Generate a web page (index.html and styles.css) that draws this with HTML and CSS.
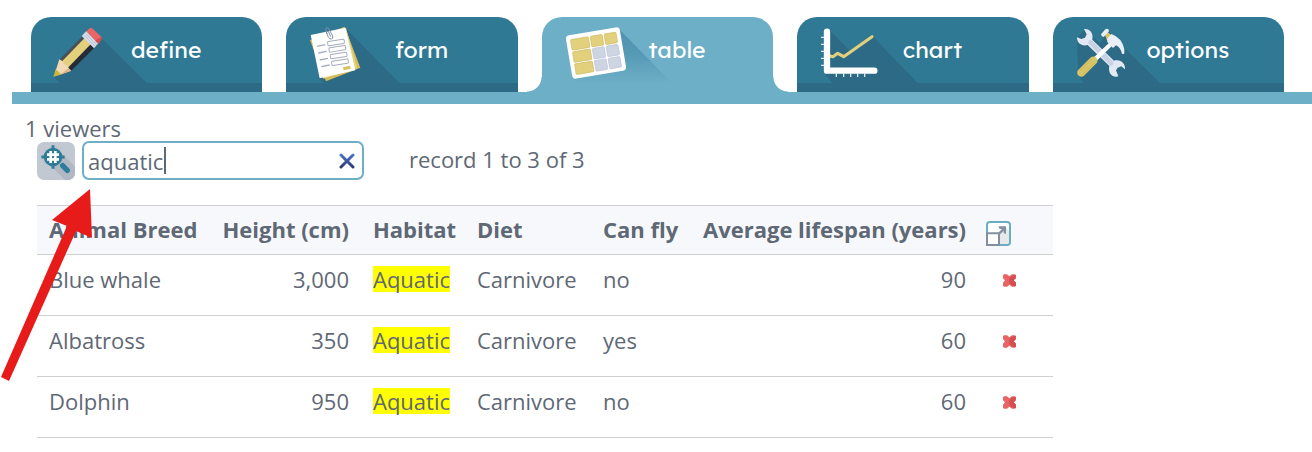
FILE: index.html
```html
<!DOCTYPE html>
<html lang="en">
<head>
<meta charset="UTF-8" />
<meta name="viewport" content="width=device-width, initial-scale=1" />
<title>Animals</title>
<link rel="stylesheet" href="styles.css">
</head>
<body>
  <nav class="tabs">
    <a class="tab" href="#define">
      <svg class="tab-icon" viewBox="93 51 420 198" aria-hidden="true">
        <path fill="#2d6a85" d="M305 115L440 249H180L160 230 260 130z" />
        <path fill="#4b4f58" d="M247 109L258 120 190 189 178 179z" />
        <path fill="#e2d07c" d="M254 114L276 137 205 207 184 186z" />
        <path fill="#262c35" d="M272 133L283 143 214 212 203 204z" />
        <path fill="#f3d9b4" d="M178 178L188 184 192 192 203 197 206 205 214 212 175 226 166 215z" />
        <path fill="#d9b58c" d="M206 205L214 212 178 225z" />
        <path fill="#cdb540" d="M167 208L184 223 160 231z" />
        <path fill="#d4dae8" d="M245 108L259 93 295 130 282 145z" />
        <path stroke="#b4bccb" stroke-width="2" d="M250 103L287 140M255 98L291 135" />
        <path fill="#ea6565" d="M259 94L267 86Q273 82 279 87L302 109Q308 115 303 121L295 131z" />
        <path fill="#d14f52" d="M288 120L304 111Q307 116 303 121L295 131 286 123z" />
      </svg>
      <span class="tab-label">define</span>
    </a>
    <a class="tab" href="#form">
      <svg class="tab-icon" viewBox="48 51 420 198" aria-hidden="true">
        <path fill="#2d6a85" d="M230 88L388 249H162L145 234z" />
        <path fill="#d5bc58" d="M120 121L224 80 271 203 168 244z" />
        <path fill="#e3d283" d="M130 112L228 84 262 205 160 236z" />
        <path fill="#fff" d="M122 105L226 83 256 211 149 235z" />
        <g fill="none" stroke="#a5acbd" stroke-width="3">
          <path stroke-width="4" d="M141 139L166 134M145 159L170 154M149 180L174 175M154 200L179 195" />
          <rect x="173" y="121" width="50" height="13" rx="3" transform="rotate(-9 198 128)" />
          <rect x="177" y="140" width="50" height="13" rx="3" transform="rotate(-9 202 147)" />
          <rect x="181" y="160" width="50" height="13" rx="3" transform="rotate(-9 206 167)" />
          <rect x="185" y="180" width="50" height="13" rx="3" transform="rotate(-9 210 187)" />
          <path stroke="#8490a6" d="M171 102L167 88Q168 81 175 84L188 108Q191 116 184 117 178 118 175 112L170 98Q170 93 175 94L182 110" />
        </g>
        <path fill="#d8c15c" d="M219 202L240 197 242 206 221 211z" />
      </svg>
      <span class="tab-label">form</span>
    </a>
    <a class="tab tab-active" href="#table" aria-current="page">
      <svg class="tab-icon" viewBox="96 51 420 198" aria-hidden="true">
        <defs>
          <linearGradient id="fade" x1="0" y1="0" x2="0" y2="1">
            <stop offset="0" stop-color="#4f91af" />
            <stop offset="0.45" stop-color="#5699b5" />
            <stop offset="1" stop-color="#6dafc6" />
          </linearGradient>
        </defs>
        <path fill="url(#fade)" d="M329 89L486 249H200L189 235z" />
        <g transform="rotate(-9.500 258 159)">
          <rect x="176" y="93" width="164" height="132" rx="11" fill="#fff" />
          <g fill="#e2d07c" stroke="#cfb95f" stroke-width="2">
            <rect x="189" y="107" width="54" height="32" rx="3" />
            <rect x="249" y="107" width="36" height="32" rx="3" />
            <rect x="291" y="107" width="36" height="32" rx="3" />
            <rect x="189" y="144" width="54" height="32" rx="3" />
            <rect x="189" y="181" width="54" height="32" rx="3" />
          </g>
          <g fill="#cdd4e2" stroke="#bac3d5" stroke-width="2">
            <rect x="249" y="144" width="36" height="32" rx="3" />
            <rect x="291" y="144" width="36" height="32" rx="3" />
            <rect x="249" y="181" width="36" height="32" rx="3" />
            <rect x="291" y="181" width="36" height="32" rx="3" />
          </g>
        </g>
      </svg>
      <span class="tab-label">table</span>
    </a>
    <a class="tab" href="#chart">
      <svg class="tab-icon" viewBox="54 51 420 198" aria-hidden="true">
        <path fill="#2d6a85" d="M151 90L214 153 281 109 416 249H160L138 222z" />
        <path fill="none" stroke="#e2d07c" stroke-width="9" stroke-linecap="round" stroke-linejoin="round" d="M153 168L162 170 176 160 194 170 279 110" />
        <path fill="none" stroke="#fff" stroke-width="19" stroke-linecap="round" stroke-linejoin="round" d="M144 95V212H286" />
        <path stroke="#dbe6ee" stroke-width="4" d="M126 112H136M126 133H136M126 154H136M126 175H136M126 196H136M172 220V231M194 220V231M215 220V231M236 220V231M257 220V231" />
      </svg>
      <span class="tab-label">chart</span>
    </a>
    <a class="tab" href="#options">
      <svg class="tab-icon" viewBox="39 51 420 198" aria-hidden="true">
        <path fill="#2d6a85" d="M111 113L135 88 180 130 205 92 250 140 360 249H131L114 226z" />
        <path fill="#e3e9f4" d="M132 87C149 85 161 99 157 119L222 182C241 176 257 190 255 208L244 199 233 203 228 211 235 229C218 234 203 220 208 198L143 135C126 140 110 130 111 112L124 117 135 113 140 103z" />
        <path stroke="#c9d2e5" stroke-width="15" stroke-linecap="round" d="M152 127L213 189" />
        <path stroke="#fff" stroke-width="13" d="M165 178L216 129" />
        <path stroke="#d9c568" stroke-width="25" stroke-linecap="round" d="M124 218L160 182" />
        <path stroke="#c6b056" stroke-width="2" d="M119 213L156 176M129 224L166 187" />
        <path fill="#d9c568" d="M193 100L203 96 214 106 201 121z" />
        <path fill="#e9eef7" d="M183 103L197 87Q202 84 206 89L207 94 191 111Q184 111 183 103zM214 102Q246 113 253 148V161L246 162Q242 142 228 136L219 144 202 126 201 117z" />
      </svg>
      <span class="tab-label">options</span>
    </a>
  </nav>

  <main class="content">
    <div class="viewers">1 viewers</div>
    <form class="search">
      <button type="button" class="search-button" aria-label="Search">
        <svg width="38" height="38" viewBox="0 0 114 114" aria-hidden="true">
          <path fill="#b1b8c4" d="M72 32L114 74V114H84L27 58z" />
          <circle cx="48" cy="45" r="28" fill="#2f7c98" />
          <path stroke="#2f7c98" stroke-width="9" d="M48 10V20M48 70V80M13 45H23M73 45H83" />
          <path stroke="#fff" stroke-width="8" d="M41 27V63M55 27V63M30 38H66M30 52H66" />
          <path stroke="#2f7c98" stroke-width="16" stroke-linecap="round" d="M77 71L91 85" />
        </svg>
      </button>
      <div class="search-box">
        <input class="search-input" type="text" value="aquatic" aria-label="Search records" autofocus />
        <span class="caret"></span>
        <button type="button" class="clear-button" aria-label="Clear search">
          <svg width="16" height="16" viewBox="0 0 16 16" aria-hidden="true">
            <defs>
              <linearGradient id="blue" x1="0" y1="0" x2="0" y2="16" gradientUnits="userSpaceOnUse">
                <stop offset="0" stop-color="#4d7bd0" />
                <stop offset="1" stop-color="#2b3270" />
              </linearGradient>
            </defs>
            <path stroke="url(#blue)" stroke-width="3" stroke-linecap="round" d="M2 2L14 14M14 2L2 14" />
          </svg>
        </button>
      </div>
      <span class="record-count">record 1 to 3 of 3</span>
    </form>

    <table class="records">
      <colgroup>
        <col class="col-breed" />
        <col class="col-height" />
        <col class="col-habitat" />
        <col class="col-diet" />
        <col class="col-fly" />
        <col />
        <col class="col-actions" />
      </colgroup>
      <thead>
        <tr>
          <th>Animal Breed</th>
          <th class="number">Height (cm)</th>
          <th>Habitat</th>
          <th>Diet</th>
          <th>Can fly</th>
          <th class="number">Average lifespan (years)</th>
          <th class="expand-cell">
            <button type="button" class="icon-button" aria-label="Expand table">
              <svg width="25" height="25" viewBox="0 0 75 75" fill="none" aria-hidden="true">
                <rect x="3" y="3" width="69" height="69" rx="9" fill="#fff" stroke="#68adc4" stroke-width="6" />
                <path fill="#e6e8ea" d="M42 36L60 20 69 30V64L64 69H42z" />
                <path fill="#fff" stroke="#84909f" stroke-width="6" d="M3 37H39V72H3z" />
                <path stroke="#84909f" stroke-width="7" d="M40 37L55 22" />
                <path fill="#84909f" d="M37 16H60V39L53 36V24H41z" />
              </svg>
            </button>
          </th>
        </tr>
      </thead>
      <tbody>
        <tr>
          <td>Blue whale</td>
          <td class="number">3,000</td>
          <td><mark>Aquatic</mark></td>
          <td>Carnivore</td>
          <td>no</td>
          <td class="number">90</td>
          <td class="delete-cell"><button type="button" class="icon-button" aria-label="Delete Blue whale"><svg width="13" height="13" viewBox="0 0 39 39" aria-hidden="true"><path fill="#e96565" d="M3 1H12L19 7 27 1H36L39 4V13L32 19 39 26V35L36 38H27L19 32 12 38H3L0 35V26L6 19 0 13V4z" /><path fill="#d34f50" d="M19 12L30 4H38V13L32 19 39 26V35L30 36 19 27z" /></svg></button></td>
        </tr>
        <tr>
          <td>Albatross</td>
          <td class="number">350</td>
          <td><mark>Aquatic</mark></td>
          <td>Carnivore</td>
          <td>yes</td>
          <td class="number">60</td>
          <td class="delete-cell"><button type="button" class="icon-button" aria-label="Delete Albatross"><svg width="13" height="13" viewBox="0 0 39 39" aria-hidden="true"><path fill="#e96565" d="M3 1H12L19 7 27 1H36L39 4V13L32 19 39 26V35L36 38H27L19 32 12 38H3L0 35V26L6 19 0 13V4z" /><path fill="#d34f50" d="M19 12L30 4H38V13L32 19 39 26V35L30 36 19 27z" /></svg></button></td>
        </tr>
        <tr>
          <td>Dolphin</td>
          <td class="number">950</td>
          <td><mark>Aquatic</mark></td>
          <td>Carnivore</td>
          <td>no</td>
          <td class="number">60</td>
          <td class="delete-cell"><button type="button" class="icon-button" aria-label="Delete Dolphin"><svg width="13" height="13" viewBox="0 0 39 39" aria-hidden="true"><path fill="#e96565" d="M3 1H12L19 7 27 1H36L39 4V13L32 19 39 26V35L36 38H27L19 32 12 38H3L0 35V26L6 19 0 13V4z" /><path fill="#d34f50" d="M19 12L30 4H38V13L32 19 39 26V35L30 36 19 27z" /></svg></button></td>
        </tr>
      </tbody>
    </table>
  </main>

  <!-- arrow pointing at the search box -->
  <svg class="arrow" width="93" height="193" viewBox="0 0 93 193" aria-hidden="true">
    <path fill="#e81b1b" d="M90 1L52 32 67 38 1 189 9 193 76 43 92 50z" />
  </svg>
</body>
</html>
```
FILE: styles.css
```css
body {
  margin: 0;
  position: relative;
  font-family: 'Trebuchet MS', 'Open Sans', sans-serif;
  font-size: 22px;
  line-height: 26px;
  color: #5f6875;
  background: #fff;
}

/* tabs */
.tabs {
  display: flex;
  gap: 24px;
  margin: 17px 0 0 12px;
  padding: 0 28px 0 19px;
  border-bottom: 12px solid #6dafc6;
}
.tab {
  flex: 1;
  display: grid;
  grid-template-columns: minmax(0, 1fr);
  position: relative;
  border-radius: 20px 20px 0 0;
  border-bottom: 9px solid #2d6a85;
  background: #307995;
  color: #fff;
  text-decoration: none;
}
.tab-icon {
  grid-area: 1 / 1;
  width: 140px;
  height: 66px;
}
.tab-label {
  grid-area: 1 / 1;
  z-index: 1;
  padding: 17px 0 0 39px;
  font-family: 'Lexend', 'Lato', sans-serif;
  font-size: 23px;
  line-height: 32px;
  text-align: center;
}
.tab-active {
  background: #6dafc6;
  border-bottom-color: #6dafc6;
}
.tab-active::before,
.tab-active::after {
  content: "";
  position: absolute;
  bottom: -9px;
  width: 15px;
  height: 15px;
}
.tab-active::before {
  right: 100%;
  background: radial-gradient(circle at 0 0, transparent 14px, #6dafc6 15px);
}
.tab-active::after {
  left: 100%;
  background: radial-gradient(circle at 100% 0, transparent 14px, #6dafc6 15px);
}

/* search */
.content {
  padding: 11px 24px 0 37px;
}
.viewers {
  margin-left: -12px;
}
.search {
  display: flex;
  align-items: center;
  gap: 7px;
  margin-bottom: 25px;
}
.search-button {
  display: flex;
  padding: 0;
  border: none;
  border-radius: 7px;
  background: #c2c8d2;
  overflow: hidden;
  cursor: pointer;
}
.search-box {
  display: flex;
  align-items: center;
  position: relative;
  box-sizing: border-box;
  width: 282px;
  height: 39px;
  padding: 0 7px 0 4px;
  border: 2px solid #6dafc6;
  border-radius: 7px;
}
.search-input {
  flex: 1;
  min-width: 0;
  padding: 0;
  border: none;
  outline: none;
  background: none;
  font: inherit;
  color: inherit;
  caret-color: transparent;
}
.caret {
  position: absolute;
  left: 80px;
  top: 4px;
  width: 2px;
  height: 27px;
  background: #5f6875;
}
.clear-button,
.icon-button {
  display: flex;
  padding: 0;
  border: none;
  background: none;
  cursor: pointer;
}
.record-count {
  margin-left: 38px;
  padding-bottom: 4px;
}

/* records */
.records {
  width: 100%;
  max-width: 1016px;
  table-layout: fixed;
  border-collapse: collapse;
  border-top: 1px solid #d0d0d0;
}
.col-breed { width: 171px; }
.col-height { width: 153px; }
.col-habitat { width: 104px; }
.col-diet { width: 126px; }
.col-fly { width: 100px; }
.col-actions { width: 75px; }
.records th,
.records td {
  padding: 11px 12px 23px;
  border-bottom: 1px solid #d0d0d0;
  text-align: left;
  vertical-align: top;
  white-space: nowrap;
}
.records th {
  padding: 10px 12px 12px;
  background: #f6f8fc;
}
.records .number {
  text-align: right;
}
.records .expand-cell {
  padding: 15px 8px 8px;
}
.records .delete-cell {
  padding: 19px 25px 0;
}
mark {
  display: inline-block;
  background: #ff0;
  color: inherit;
}

.arrow {
  position: absolute;
  left: 0;
  top: 188px;
  pointer-events: none;
}
```
